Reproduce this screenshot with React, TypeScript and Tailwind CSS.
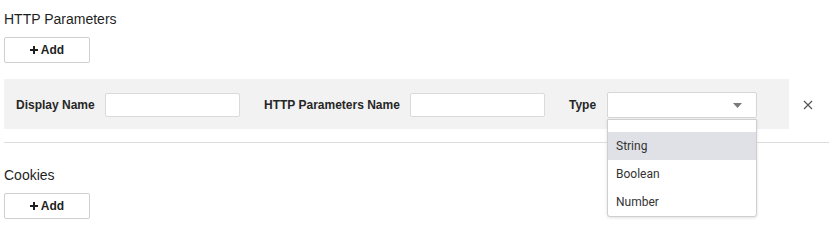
import React from "react";

const AddButton = () => {
  return (
    <button className="w-[86px] h-[26px] bg-white border border-[#cfcfcf] rounded-[2px] text-[12px] font-bold text-[#1f1f1f] flex items-center justify-center gap-[3px]">
      <svg width="8" height="8" viewBox="0 0 8 8">
        <path d="M4 0v8M0 4h8" stroke="#1f1f1f" strokeWidth="2" />
      </svg>
      <span>Add</span>
    </button>
  );
};

const TypeSelect = () => {
  const options = ["String", "Boolean", "Number"];
  return (
    <div className="relative w-[150px] h-[26px]">
      <div className="w-full h-full bg-white border border-[#d6d6d6] rounded-[2px] flex items-center justify-end pr-[14px]">
        <svg width="9" height="5" viewBox="0 0 9 5">
          <path d="M0 0h9L4.5 5z" fill="#7a7a7a" />
        </svg>
      </div>
      <div className="absolute left-0 top-[27px] w-[150px] bg-white border border-[#cfcfcf] rounded-b-[3px] shadow-[0_1px_3px_rgba(0,0,0,0.12)] pt-[12px] z-10 font-['Roboto',sans-serif] font-normal">
        {options.map((opt, i) => (
          <div
            key={opt}
            className={
              i === 0
                ? "h-[28px] flex items-center pl-[8px] text-[12px] text-[#333] bg-[#dfe1e6]"
                : "h-[28px] flex items-center pl-[8px] text-[12px] text-[#333]"
            }
          >
            {opt}
          </div>
        ))}
      </div>
    </div>
  );
};

const App = () => {
  return (
    <div className="w-[830px] h-[229px] bg-white pl-[4px] pt-[9px] font-['Liberation_Sans',Arial,sans-serif] text-[#1f1f1f] overflow-hidden">
      <h3 className="text-[14px] leading-[20px]">HTTP Parameters</h3>
      <div className="mt-[8px]">
        <AddButton />
      </div>
      <div className="mt-[16px] flex items-center">
        <div className="w-[785px] h-[50px] bg-[#f2f2f2] flex items-center pl-[12px] pt-[2px] text-[12px] font-semibold text-[#262626]">
          <label className="w-[89px] shrink-0">Display Name</label>
          <input className="w-[135px] h-[24px] bg-white border border-[#dadada] rounded-[2px] outline-none" />
          <label className="w-[146px] shrink-0 pl-[24px] box-content">HTTP Parameters Name</label>
          <input className="w-[135px] h-[24px] bg-white border border-[#dadada] rounded-[2px] outline-none" />
          <label className="w-[38px] shrink-0 pl-[24px] box-content">Type</label>
          <TypeSelect />
        </div>
        <button className="ml-[14px] mt-[2px] w-[10px] h-[10px] flex items-center justify-center">
          <svg width="10" height="10" viewBox="0 0 10 10">
            <path d="M1 1l8 8M9 1l-8 8" stroke="#555" strokeWidth="1.2" />
          </svg>
        </button>
      </div>
      <div className="mt-[13px] h-px w-[825px] bg-[#dcdcdc]" />
      <h3 className="mt-[22px] text-[14px] leading-[20px]">Cookies</h3>
      <div className="mt-[8px]">
        <AddButton />
      </div>
    </div>
  );
};

export default App;
